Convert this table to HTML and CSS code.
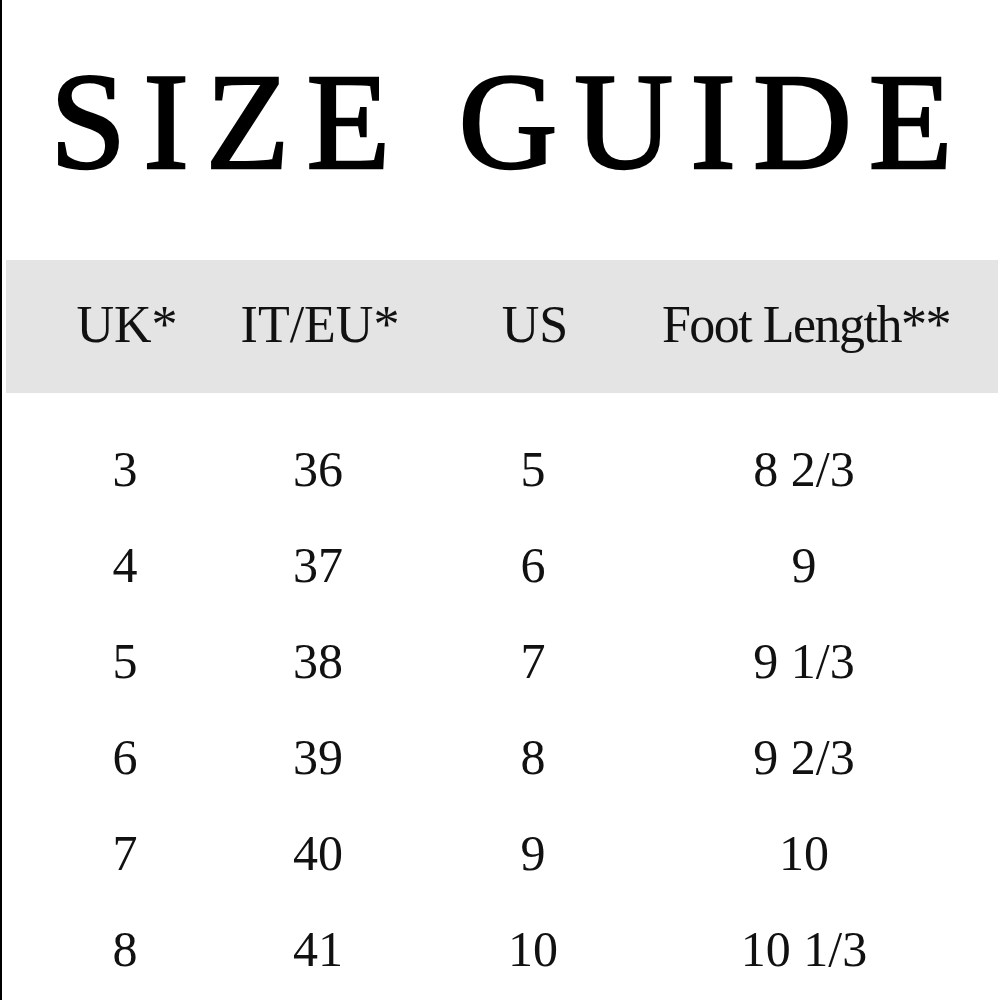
FILE: index.html
```html
<!DOCTYPE html>
<html>
<head>
<meta charset="utf-8">
<link rel="stylesheet" href="styles.css">
</head>
<body>
<div class="page">
  <h1 class="title">SIZE GUIDE</h1>
  <div class="band">
    <div class="grid head">
      <div>UK*</div><div>IT/EU*</div><div>US</div><div class="tight">Foot Length**</div>
    </div>
  </div>
  <div class="grid rows">
    <div>3</div><div>36</div><div>5</div><div>8 2/3</div>
    <div>4</div><div>37</div><div>6</div><div>9</div>
    <div>5</div><div>38</div><div>7</div><div>9 1/3</div>
    <div>6</div><div>39</div><div>8</div><div>9 2/3</div>
    <div>7</div><div>40</div><div>9</div><div>10</div>
    <div>8</div><div>41</div><div>10</div><div>10 1/3</div>
  </div>
</div>
</body>
</html>
```
FILE: styles.css
```css
html, body {
  margin: 0;
  padding: 0;
  background: #ffffff;
}
.page {
  width: 998px;
  height: 1000px;
  border-left: 2px solid #000;
  background: #fff;
  overflow: hidden;
  font-family: "Liberation Serif", "Times New Roman", serif;
  color: #111;
}
.title {
  margin: 0;
  height: 244px;
  padding: 0 0 16px 48px;
  font-size: 137px;
  line-height: 244px;
  font-weight: normal;
  letter-spacing: 17px;
  white-space: nowrap;
  color: #000;
  -webkit-text-stroke: 2.5px #000;
}
.band {
  margin: 0 2px 0 4px;
  height: 129px;
  padding: 0 0 4px 21px;
  background: #e4e4e4;
}
.grid {
  display: grid;
  grid-template-columns: 200px 186px 244px 298px;
  text-align: center;
}
.head {
  font-size: 52px;
  line-height: 129px;
}
.tight {
  letter-spacing: -1.5px;
}
.rows {
  margin-top: 28px;
  margin-left: 23px;
  font-size: 50px;
  line-height: 96px;
}
```
